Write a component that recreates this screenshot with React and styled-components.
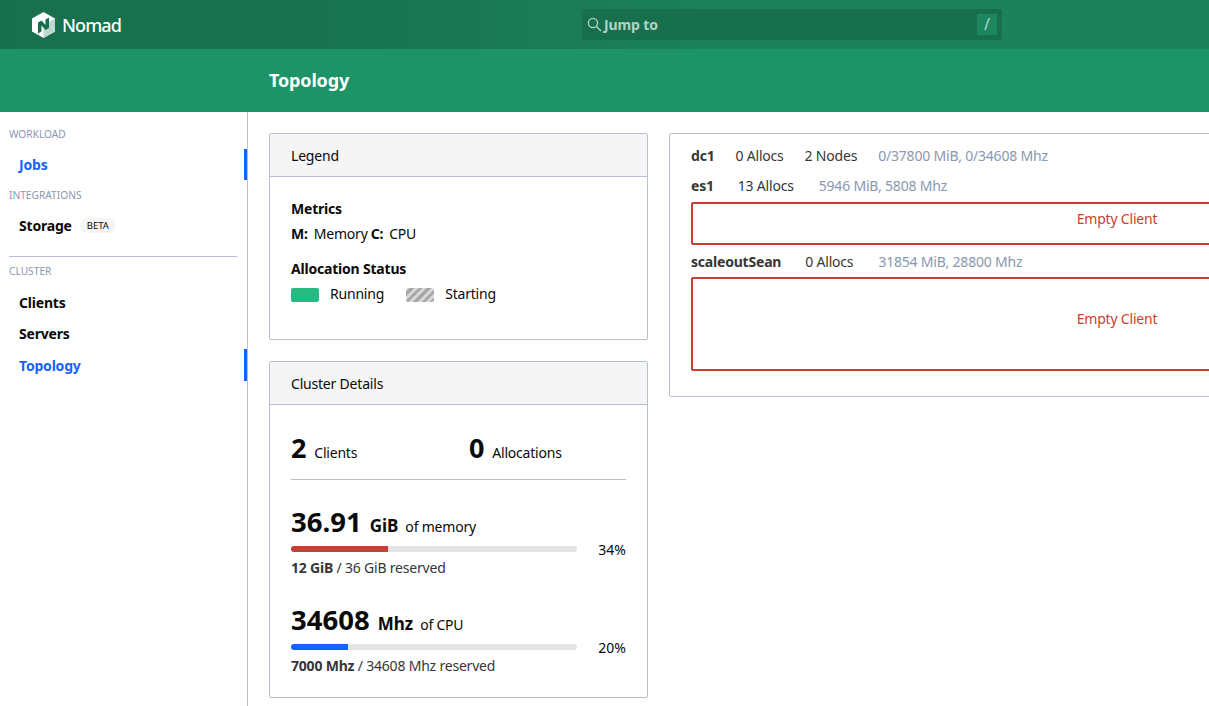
import React from 'react';
import styled, { createGlobalStyle } from 'styled-components';

const GlobalStyle = createGlobalStyle`
  html, body {
    margin: 0;
    height: 100%;
    overflow: hidden;
    background: #fff;
  }
  body {
    font-family: "Noto Sans", "Open Sans", sans-serif;
    font-size: 14px;
    letter-spacing: -0.2px;
    color: #0a0a0a;
  }
`;

const Page = styled.div`
  width: 1209px;
  height: 706px;
  overflow: hidden;
  display: flex;
  flex-direction: column;
`;

const TopBar = styled.header`
  height: 49px;
  flex: none;
  display: flex;
  align-items: center;
  background: linear-gradient(90deg, #18704e 0%, #18724f 25%, #1b825b 60%, #1b825b 100%);
`;

const Brand = styled.div`
  width: 582px;
  flex: none;
  display: flex;
  align-items: center;
  gap: 7px;
  padding-left: 32px;
  box-sizing: border-box;
  color: #fff;
  font-size: 18px;
  font-weight: 500;
  letter-spacing: -0.9px;
`;

const SearchBox = styled.div`
  width: 420px;
  height: 31px;
  margin-top: -1px;
  box-sizing: border-box;
  padding: 0 5px;
  display: flex;
  align-items: center;
  gap: 2px;
  background: #186f4e;
  border-radius: 2px;
  color: #b1d3c5;
  font-size: 14px;
  font-weight: 700;
  letter-spacing: -0.1px;
`;

const SearchLabel = styled.span`
  flex: 1;
`;

const SlashKey = styled.span`
  width: 20px;
  height: 21px;
  display: flex;
  align-items: center;
  justify-content: center;
  background: #1c8660;
  font-size: 16px;
  font-weight: 400;
`;

const SubBar = styled.div`
  height: 63px;
  flex: none;
  display: flex;
  align-items: center;
  padding: 0 0 2px 269px;
  box-sizing: border-box;
  background: #1d9467;
  color: #fff;
  font-size: 18px;
  font-weight: 700;
  letter-spacing: -0.15px;
`;

const Body = styled.div`
  flex: 1;
  display: flex;
  min-height: 0;
`;

const Sidebar = styled.nav`
  width: 248px;
  flex: none;
  box-sizing: border-box;
  border-right: 1px solid #b7c0d2;
  padding-top: 15px;
`;

const MenuLabel = styled.div`
  height: 14px;
  line-height: 14px;
  margin-top: ${(p) => p.$top || 0}px;
  padding-left: 9px;
  font-size: 10.2px;
  letter-spacing: 0;
  color: #8a97b1;
  text-transform: uppercase;
`;

const MenuItem = styled.div`
  height: ${(p) => p.$height || 31}px;
  margin-top: ${(p) => p.$top || 0}px;
  padding-left: 19px;
  display: flex;
  align-items: center;
  gap: 8px;
  font-size: 14px;
  font-weight: 700;
  color: ${(p) => (p.$active ? '#1563ff' : '#0a0a0a')};
  border-right: 3px solid ${(p) => (p.$active ? '#1563ff' : 'transparent')};
`;

const BetaTag = styled.span`
  height: 15px;
  line-height: 15px;
  padding: 0 7px;
  border-radius: 8px;
  background: #f5f5f5;
  font-size: 9.5px;
  font-weight: 400;
  letter-spacing: 0;
`;

const MenuRule = styled.div`
  height: 1px;
  margin: 15px 10px 7px 9px;
  background: #b7c0d2;
`;

const Main = styled.main`
  flex: 1;
  display: flex;
  align-items: flex-start;
  gap: 21px;
  padding: 21px 0 0 21px;
  min-width: 0;
`;

const LeftColumn = styled.div`
  width: 379px;
  flex: none;
  display: flex;
  flex-direction: column;
  gap: 21px;
`;

const Card = styled.section`
  box-sizing: border-box;
  border: 1px solid #b7c0d2;
  border-radius: 2px;
  height: ${(p) => p.$height}px;
`;

const CardHead = styled.div`
  height: 43px;
  box-sizing: border-box;
  padding-left: 21px;
  display: flex;
  align-items: center;
  background: #f5f5f5;
  border-bottom: 1px solid #b7c0d2;
  font-size: 14px;
`;

const LegendBody = styled.div`
  padding: 22px 21px 0;
`;

const LegendTitle = styled.div`
  height: 20px;
  line-height: 20px;
  font-weight: 700;
  margin-top: ${(p) => p.$top || 0}px;
`;

const LegendRow = styled.div`
  display: flex;
  align-items: center;
  height: 20px;
  margin-top: 4px;
`;

const Metric = styled.span`
  font-weight: 700;
  margin-right: 6px;
`;

const MetricValue = styled.span`
  margin-right: 3px;
`;

const Swatch = styled.span`
  width: 28px;
  height: 14px;
  flex: none;
  border-radius: 2px;
  margin: 4px 11px 0 0;
  background: ${(p) =>
    p.$striped
      ? 'repeating-linear-gradient(-45deg, #a8a8a8 0 3px, #d8d8d8 3px 6px)'
      : '#25ba81'};
`;

const SwatchLabel = styled.span`
  margin-right: 22px;
`;

const DetailsBody = styled.div`
  padding: 0 21px;
`;

const Totals = styled.div`
  display: grid;
  grid-template-columns: 178px 1fr;
  height: 75px;
  align-items: center;
  padding-top: 11px;
  box-sizing: border-box;
  border-bottom: 1px solid #b7c0d2;
`;

const Total = styled.div`
  display: flex;
  align-items: baseline;
  gap: 8px;
`;

const TotalNumber = styled.span`
  font-size: 27px;
  font-weight: 700;
`;

const Meter = styled.div`
  margin-top: ${(p) => p.$top}px;
`;

const MeterHead = styled.div`
  display: flex;
  align-items: baseline;
  height: 36px;
`;

const MeterValue = styled.span`
  font-size: 27.5px;
  font-weight: 700;
  letter-spacing: 0;
  margin-right: 8px;
`;

const MeterUnit = styled.span`
  font-size: 17px;
  font-weight: 700;
  letter-spacing: 0;
  margin-right: 7px;
`;

const MeterBarRow = styled.div`
  display: flex;
  align-items: center;
  justify-content: space-between;
  height: 20px;
  letter-spacing: 0;
`;

const Track = styled.div`
  width: 286px;
  height: 6px;
  border-radius: 3px;
  overflow: hidden;
  background: #e4e4e4;
`;

const Fill = styled.div`
  height: 100%;
  background: ${(p) => p.$color};
`;

const Reserved = styled.div`
  height: 18px;
  line-height: 18px;
  color: #363636;
`;

const TopologyCard = styled.section`
  width: 896px;
  height: 264px;
  flex: none;
  box-sizing: border-box;
  border: 1px solid #b7c0d2;
  border-radius: 2px;
  padding: 9px 21px 0;
`;

const ClientRow = styled.div`
  display: flex;
  align-items: center;
  height: ${(p) => p.$height || 25}px;
  color: #363636;
`;

const ClientName = styled.span`
  font-weight: 700;
  margin-right: ${(p) => (p.$node ? 24 : 21)}px;
`;

const ClientStat = styled.span`
  margin-right: ${(p) => (p.$node ? 25 : 21)}px;
`;

const ClientUsage = styled.span`
  color: #8a97b1;
`;

const EmptyClient = styled.div`
  height: ${(p) => p.$height}px;
  box-sizing: border-box;
  border: 2px solid #c73e35;
  border-radius: 2px;
  padding: ${(p) => p.$pad}px 0 0;
  text-align: center;
  color: #c73e35;
`;

const NomadLogo = () => (
  <svg width="23" height="26" viewBox="0 0 23 26" aria-hidden="true">
    <path d="M11.5 0 23 6.5V19.5L11.5 26 0 19.5V6.5Z" fill="#fff" />
    <path d="M11.5 13 23 6.5V19.5L11.5 26Z" fill="#bdd8cf" />
    <path
      d="M6 10.5 9.5 8.5 13.5 13V7.5L17 5.5V16L13.5 18 9.5 13.5V19.5L6 21.5Z"
      fill="#18704e"
    />
  </svg>
);

const SearchIcon = () => (
  <svg width="15" height="15" viewBox="0 0 15 15" fill="none" stroke="#b1d3c5" strokeWidth="1.4" aria-hidden="true">
    <circle cx="6" cy="6" r="4.6" />
    <path d="M9.4 9.4 14 14" />
  </svg>
);

const App = () => (
  <Page>
    <GlobalStyle />
    <TopBar>
      <Brand>
        <NomadLogo />
        Nomad
      </Brand>
      <SearchBox>
        <SearchIcon />
        <SearchLabel>Jump to</SearchLabel>
        <SlashKey>/</SlashKey>
      </SearchBox>
    </TopBar>
    <SubBar>Topology</SubBar>
    <Body>
      <Sidebar>
        <MenuLabel>Workload</MenuLabel>
        <MenuItem $active $top={8}>Jobs</MenuItem>
        <MenuLabel $top={8}>Integrations</MenuLabel>
        <MenuItem $top={8}>
          Storage
          <BetaTag>BETA</BetaTag>
        </MenuItem>
        <MenuRule />
        <MenuLabel>Cluster</MenuLabel>
        <MenuItem $top={9}>Clients</MenuItem>
        <MenuItem>Servers</MenuItem>
        <MenuItem $active $height={32}>Topology</MenuItem>
      </Sidebar>
      <Main>
        <LeftColumn>
          <Card $height={207}>
            <CardHead>Legend</CardHead>
            <LegendBody>
              <LegendTitle>Metrics</LegendTitle>
              <LegendRow>
                <Metric>M:</Metric>
                <MetricValue>Memory</MetricValue>
                <Metric>C:</Metric>
                <span>CPU</span>
              </LegendRow>
              <LegendTitle $top={16}>Allocation Status</LegendTitle>
              <LegendRow>
                <Swatch />
                <SwatchLabel>Running</SwatchLabel>
                <Swatch $striped />
                <span>Starting</span>
              </LegendRow>
            </LegendBody>
          </Card>
          <Card $height={337}>
            <CardHead>Cluster Details</CardHead>
            <DetailsBody>
              <Totals>
                <Total>
                  <TotalNumber>2</TotalNumber>
                  Clients
                </Total>
                <Total>
                  <TotalNumber>0</TotalNumber>
                  Allocations
                </Total>
              </Totals>
              <Meter $top={23}>
                <MeterHead>
                  <MeterValue>36.91</MeterValue>
                  <MeterUnit>GiB</MeterUnit>
                  of memory
                </MeterHead>
                <MeterBarRow>
                  <Track>
                    <Fill $color="#c73e35" style={{ width: '34%' }} />
                  </Track>
                  34%
                </MeterBarRow>
                <Reserved>
                  <b>12 GiB</b> / 36 GiB reserved
                </Reserved>
              </Meter>
              <Meter $top={24}>
                <MeterHead>
                  <MeterValue>34608</MeterValue>
                  <MeterUnit>Mhz</MeterUnit>
                  of CPU
                </MeterHead>
                <MeterBarRow>
                  <Track>
                    <Fill $color="#1563ff" style={{ width: '20%' }} />
                  </Track>
                  20%
                </MeterBarRow>
                <Reserved>
                  <b>7000 Mhz</b> / 34608 Mhz reserved
                </Reserved>
              </Meter>
            </DetailsBody>
          </Card>
        </LeftColumn>
        <TopologyCard>
          <ClientRow>
            <ClientName>dc1</ClientName>
            <ClientStat>0 Allocs</ClientStat>
            <ClientStat>2 Nodes</ClientStat>
            <ClientUsage>0/37800 MiB, 0/34608 Mhz</ClientUsage>
          </ClientRow>
          <ClientRow $height={34}>
            <ClientName $node>es1</ClientName>
            <ClientStat $node>13 Allocs</ClientStat>
            <ClientUsage>5946 MiB, 5808 Mhz</ClientUsage>
          </ClientRow>
          <EmptyClient $height={43} $pad={5}>Empty Client</EmptyClient>
          <ClientRow $height={32}>
            <ClientName $node>scaleoutSean</ClientName>
            <ClientStat $node>0 Allocs</ClientStat>
            <ClientUsage>31854 MiB, 28800 Mhz</ClientUsage>
          </ClientRow>
          <EmptyClient $height={94} $pad={30}>Empty Client</EmptyClient>
        </TopologyCard>
      </Main>
    </Body>
  </Page>
);

export default App;
